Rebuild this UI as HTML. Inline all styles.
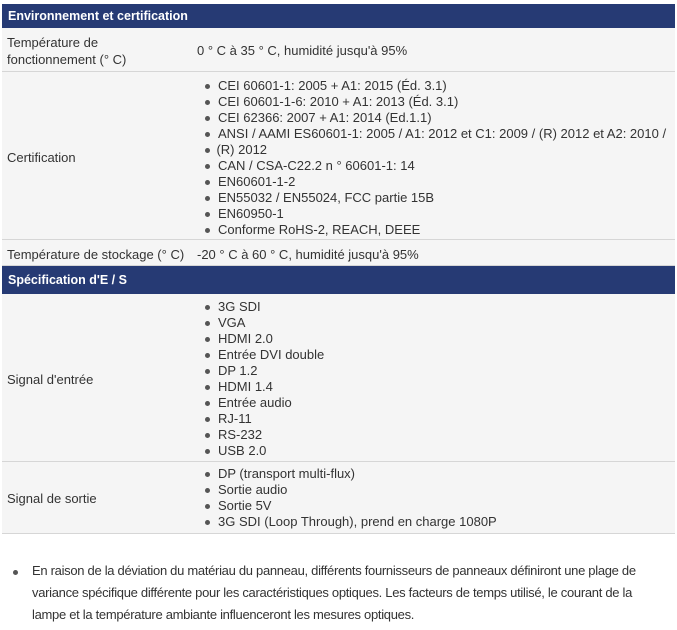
<!DOCTYPE html>
<html><head><meta charset="utf-8"><style>
body{margin:0;width:677px;height:630px;background:#fff;font-family:"Liberation Sans",sans-serif;color:#333;font-size:13px;position:relative;overflow:hidden}
.h{position:absolute;left:2px;width:673px;background:#263a74;color:#fff;font-weight:bold;font-size:12.5px;box-sizing:border-box;padding-left:6px}
.r{position:absolute;left:2px;width:673px;background:#f5f5f5;border-bottom:1px solid #d6d6d6;box-sizing:border-box}
.l{position:absolute;left:5px}
.v{position:absolute;left:195px}
ul{margin:0;padding:0;list-style:none;position:absolute;left:200px}
li{height:16px;line-height:16px;position:relative;padding-left:16px;white-space:nowrap}
li:before{content:"";position:absolute;left:3px;top:6px;width:5px;height:5px;border-radius:50%;background:#555}
.n{position:absolute;left:32px;top:560px;width:632px;line-height:22px;font-size:13px;letter-spacing:-0.3px;color:#333}
.b{position:absolute;left:13px;top:570px;width:5px;height:5px;border-radius:50%;background:#555}
</style></head><body>
<div class="h" style="top:4px;height:24px;line-height:24px">Environnement et certification</div>
<div class="r" style="top:28px;height:44px"><div class="l" style="top:6px;line-height:17px">Température de<br>fonctionnement (° C)</div><div class="v" style="top:15px">0 ° C à 35 ° C, humidité jusqu'à 95%</div></div>
<div class="r" style="top:72px;height:168px"><div class="l" style="top:78px">Certification</div>
<ul style="top:6px">
<li>CEI 60601-1: 2005 + A1: 2015 (Éd. 3.1)</li>
<li>CEI 60601-1-6: 2010 + A1: 2013 (Éd. 3.1)</li>
<li>CEI 62366: 2007 + A1: 2014 (Ed.1.1)</li>
<li>ANSI / AAMI ES60601-1: 2005 / A1: 2012 et C1: 2009 / (R) 2012 et A2: 2010 /</li>
<li style="padding-left:0">&nbsp;&nbsp;&nbsp;&nbsp;(R) 2012</li>
<li>CAN / CSA-C22.2 n ° 60601-1: 14</li>
<li>EN60601-1-2</li>
<li>EN55032 / EN55024, FCC partie 15B</li>
<li>EN60950-1</li>
<li>Conforme RoHS-2, REACH, DEEE</li>
</ul></div>
<div class="r" style="top:240px;height:26px"><div class="l" style="top:7px">Température de stockage (° C)</div><div class="v" style="top:7px">-20 ° C à 60 ° C, humidité jusqu'à 95%</div></div>
<div class="h" style="top:266px;height:28px;line-height:28px">Spécification d'E / S</div>
<div class="r" style="top:294px;height:168px"><div class="l" style="top:78px">Signal d'entrée</div>
<ul style="top:5px">
<li>3G SDI</li><li>VGA</li><li>HDMI 2.0</li><li>Entrée DVI double</li><li>DP 1.2</li><li>HDMI 1.4</li><li>Entrée audio</li><li>RJ-11</li><li>RS-232</li><li>USB 2.0</li>
</ul></div>
<div class="r" style="top:462px;height:72px"><div class="l" style="top:29px">Signal de sortie</div>
<ul style="top:4px">
<li>DP (transport multi-flux)</li><li>Sortie audio</li><li>Sortie 5V</li><li>3G SDI (Loop Through), prend en charge 1080P</li>
</ul></div>
<div class="b"></div>
<div class="n">En raison de la déviation du matériau du panneau, différents fournisseurs de panneaux définiront une plage de<br>variance spécifique différente pour les caractéristiques optiques. Les facteurs de temps utilisé, le courant de la<br>lampe et la température ambiante influenceront les mesures optiques.</div>
</body></html>
